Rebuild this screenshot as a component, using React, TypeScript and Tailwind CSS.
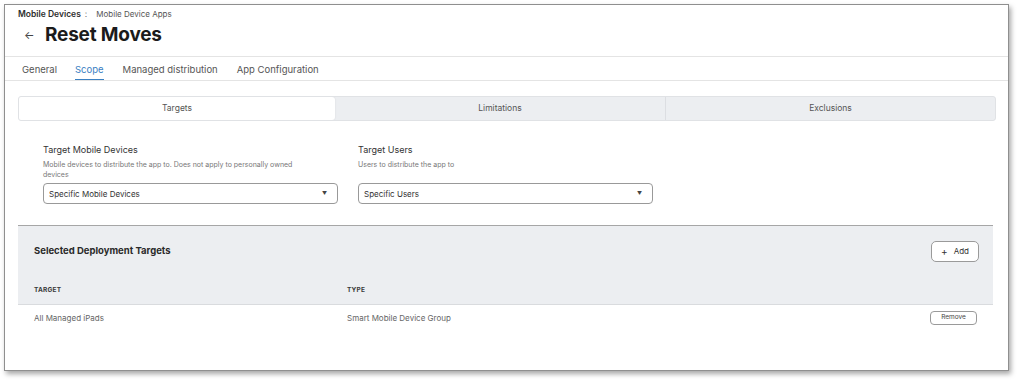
import React from "react";

export default function App() {
  return (
    <div className="w-[1024px] h-[384px] bg-white pl-[4px] pt-[4px]" style={{ fontFamily: "Inter, 'Noto Sans', sans-serif" }}>
      <div className="w-[1005px] h-[367px] border border-[#8f8f8f] bg-white shadow-[2px_3px_5px_rgba(0,0,0,0.35)] flex flex-col">
        {/* header */}
        <div className="h-[52px] border-b border-[#e4e4e4] pl-[13px] pt-[3px]">
          <div className="flex items-center h-[12px] text-[8.5px] leading-[12px]">
            <span className="font-semibold text-[#2d2d2d]">Mobile Devices</span>
            <span className="text-[#666] ml-[4px]">:</span>
            <span className="text-[#555] ml-[9px] text-[8px]">Mobile Device Apps</span>
          </div>
          <div className="flex items-center h-[24px] mt-[3px]">
            <span className="text-[#444] text-[11px] ml-[6px] w-[18px]">←</span>
            <span className="text-[19px] font-bold text-[#1b1b1b] ml-[3px] tracking-[-0.2px]">Reset Moves</span>
          </div>
        </div>
        {/* tabs */}
        <div className="h-[24px] border-b border-[#e4e4e4] flex items-stretch pl-[17px] text-[9.5px] text-[#555]">
          <div className="flex items-center pt-[3px]">General</div>
          <div className="flex items-center ml-[18px] text-[#3a80c2] border-b-[1.5px] border-[#3a80c2] pt-[5px]">Scope</div>
          <div className="flex items-center ml-[19px] pt-[3px]">Managed distribution</div>
          <div className="flex items-center ml-[19px] pt-[3px]">App Configuration</div>
        </div>
        {/* content */}
        <div className="pl-[13px] pr-[12px]">
          <div className="mt-[15px] h-[25px] flex border border-[#e0e2e5] rounded-[3px] bg-[#eceef1] text-[8.5px] text-[#555] overflow-hidden">
            <div className="w-[316px] bg-white flex items-center justify-center rounded-r-[3px] shadow-[0_0_2px_rgba(0,0,0,0.1)]">Targets</div>
            <div className="w-[331px] flex items-center justify-center border-r border-[#dcdee2]">Limitations</div>
            <div className="flex-1 flex items-center justify-center">Exclusions</div>
          </div>

          <div className="flex pl-[25px] mt-[23px] gap-[20px]">
            <div className="w-[295px]">
              <div className="text-[9px] leading-[12px] text-[#333]">Target Mobile Devices</div>
              <div className="text-[7px] leading-[10px] text-[#777] mt-[4px] pr-[20px]">Mobile devices to distribute the app to. Does not apply to personally owned devices</div>
              <div className="mt-[3px] h-[21px] border border-[#999] rounded-[4px] flex items-center justify-between px-[5px] text-[8px] text-[#333]">
                <span>Specific Mobile Devices</span>
                <span className="text-[5px] text-[#444] mr-[5px]">▼</span>
              </div>
            </div>
            <div className="w-[295px]">
              <div className="text-[9px] leading-[12px] text-[#333]">Target Users</div>
              <div className="text-[7px] leading-[10px] text-[#777] mt-[4px]">Users to distribute the app to</div>
              <div className="mt-[13px] h-[21px] border border-[#999] rounded-[4px] flex items-center justify-between px-[5px] text-[8px] text-[#333]">
                <span>Specific Users</span>
                <span className="text-[5px] text-[#444] mr-[5px]">▼</span>
              </div>
            </div>
          </div>

          <div className="mt-[21px] mr-[3px] bg-[#eceef1] border-t border-[#a6a6a6] border-b border-b-[#d9dbde] h-[80px] flex flex-col px-[16px]">
            <div className="flex items-center justify-between h-[36px] mt-[7px]">
              <span className="text-[9.5px] font-bold text-[#2a2a2a]">Selected Deployment Targets</span>
              <div className="h-[21px] w-[48px] bg-white border border-[#9a9a9a] rounded-[5px] flex items-center justify-center text-[8px] text-[#333] gap-[6px] mr-[-2px]">
                <span className="text-[10px] leading-none">+</span>
                <span>Add</span>
              </div>
            </div>
            <div className="flex mt-[17px] text-[6.5px] font-bold text-[#3a3a3a] tracking-[0.2px]">
              <span className="w-[313px]">TARGET</span>
              <span>TYPE</span>
            </div>
          </div>

          <div className="mr-[3px] h-[26px] flex items-center px-[16px] text-[8px] text-[#666]">
            <span className="w-[313px]">All Managed iPads</span>
            <span className="flex-1">Smart Mobile Device Group</span>
            <div className="h-[14px] w-[47px] border border-[#9a9a9a] rounded-[4px] flex items-center justify-center text-[6.5px] text-[#444]">Remove</div>
          </div>
        </div>
      </div>
    </div>
  );
}
